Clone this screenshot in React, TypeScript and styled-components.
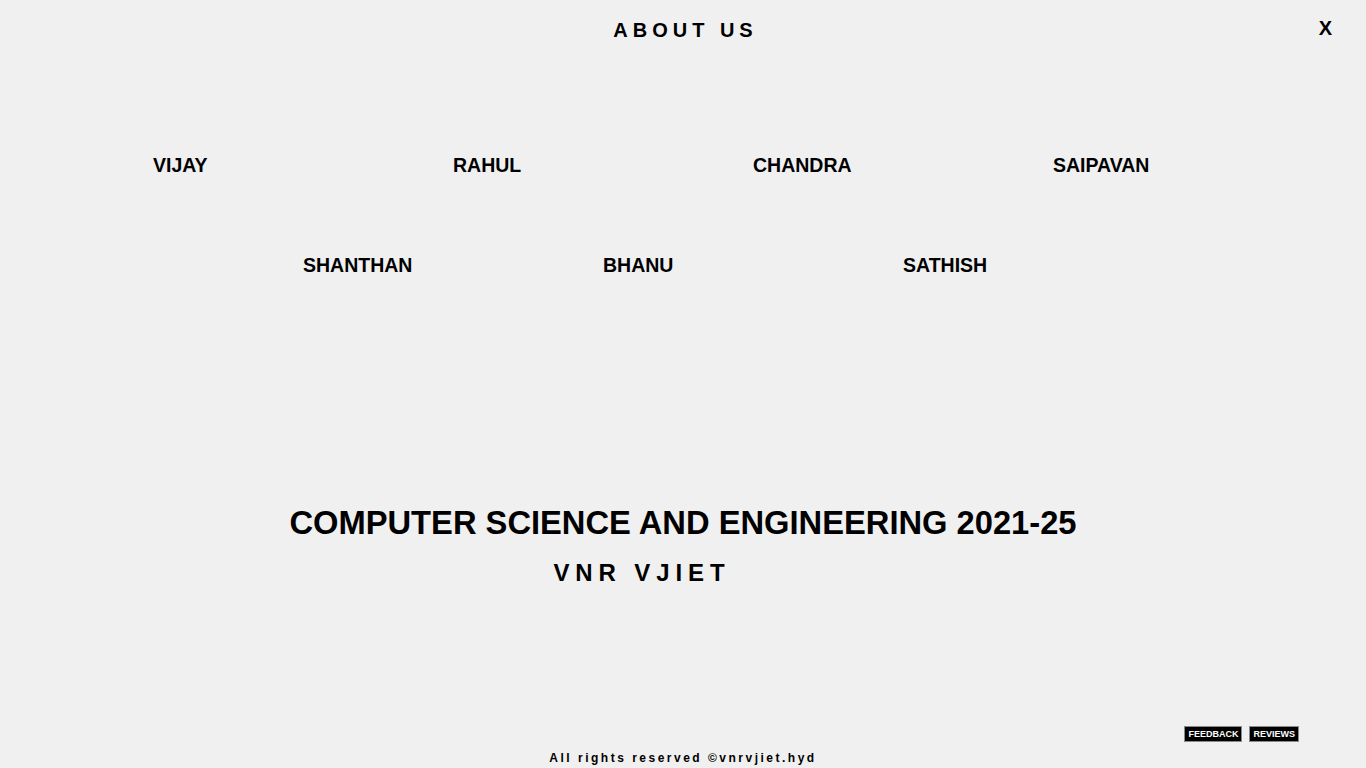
import React from "react";
import styled, { createGlobalStyle } from "styled-components";

const GlobalStyle = createGlobalStyle`
  html, body {
    margin: 0;
    padding: 0;
    background: #f0f0f0;
  }
  body {
    font-family: "Liberation Sans", Arial, sans-serif;
    color: #000;
  }
  * { box-sizing: border-box; }
`;

const Page = styled.div`
  min-height: 100vh;
  display: flex;
  flex-direction: column;
  background: #f0f0f0;
`;

const Header = styled.header`
  display: grid;
  grid-template-columns: 1fr auto 1fr;
  align-items: start;
  padding: 20px 34px 0 34px;
`;

const Title = styled.h1`
  grid-column: 2;
  margin: 0;
  padding-left: 5px;
  font-size: 20px;
  line-height: 20px;
  font-weight: 700;
  letter-spacing: 5px;
`;

const Close = styled.button`
  grid-column: 3;
  justify-self: end;
  margin: -2px 0 0 0;
  padding: 0;
  border: none;
  background: transparent;
  font-family: "Liberation Sans", Arial, sans-serif;
  font-size: 20px;
  line-height: 20px;
  font-weight: 700;
  color: #000;
  cursor: pointer;
`;

const Team = styled.section`
  display: flex;
  flex-direction: column;
  gap: 80px;
  margin-top: 115px;
`;

const NameRow = styled.div<{ $indent: number }>`
  display: flex;
  padding-left: ${(p) => p.$indent}px;
`;

const Name = styled.h3`
  width: 300px;
  margin: 0;
  font-size: 19.5px;
  line-height: 20px;
  font-weight: 700;
`;

const Department = styled.h1`
  margin: 231px 0 0 0;
  text-align: center;
  font-size: 32.7px;
  line-height: 33px;
  font-weight: 700;
`;

const College = styled.h2`
  margin: 22px 82px 0 0;
  text-align: center;
  font-size: 24px;
  line-height: 24px;
  font-weight: 700;
  letter-spacing: 5.9px;
`;

const Footer = styled.footer`
  margin-top: auto;
  display: flex;
  flex-direction: column;
  gap: 10px;
  padding-bottom: 4px;
`;

const ButtonRow = styled.div`
  display: flex;
  justify-content: flex-end;
  gap: 7px;
  padding-right: 67px;
`;

const SmallButton = styled.button`
  height: 16px;
  padding: 0 3px;
  border: 1px solid #8a8a8a;
  background: #000;
  color: #fff;
  font-family: "Liberation Sans", Arial, sans-serif;
  font-size: 9px;
  line-height: 12px;
  font-weight: 700;
  cursor: pointer;
`;

const Copyright = styled.p`
  margin: 0;
  text-align: center;
  font-size: 12px;
  line-height: 12px;
  font-weight: 700;
  letter-spacing: 2.5px;
`;

const rowOne = ["VIJAY", "RAHUL", "CHANDRA", "SAIPAVAN"];
const rowTwo = ["SHANTHAN", "BHANU", "SATHISH"];

export default function App() {
  return (
    <>
      <GlobalStyle />
      <Page>
        <Header>
          <Title>ABOUT US</Title>
          <Close aria-label="close">X</Close>
        </Header>
        <Team>
          <NameRow $indent={153}>
            {rowOne.map((n) => (
              <Name key={n}>{n}</Name>
            ))}
          </NameRow>
          <NameRow $indent={303}>
            {rowTwo.map((n) => (
              <Name key={n}>{n}</Name>
            ))}
          </NameRow>
        </Team>
        <Department>COMPUTER SCIENCE AND ENGINEERING 2021-25</Department>
        <College>VNR VJIET</College>
        <Footer>
          <ButtonRow>
            <SmallButton>FEEDBACK</SmallButton>
            <SmallButton>REVIEWS</SmallButton>
          </ButtonRow>
          <Copyright>All rights reserved ©vnrvjiet.hyd</Copyright>
        </Footer>
      </Page>
    </>
  );
}
